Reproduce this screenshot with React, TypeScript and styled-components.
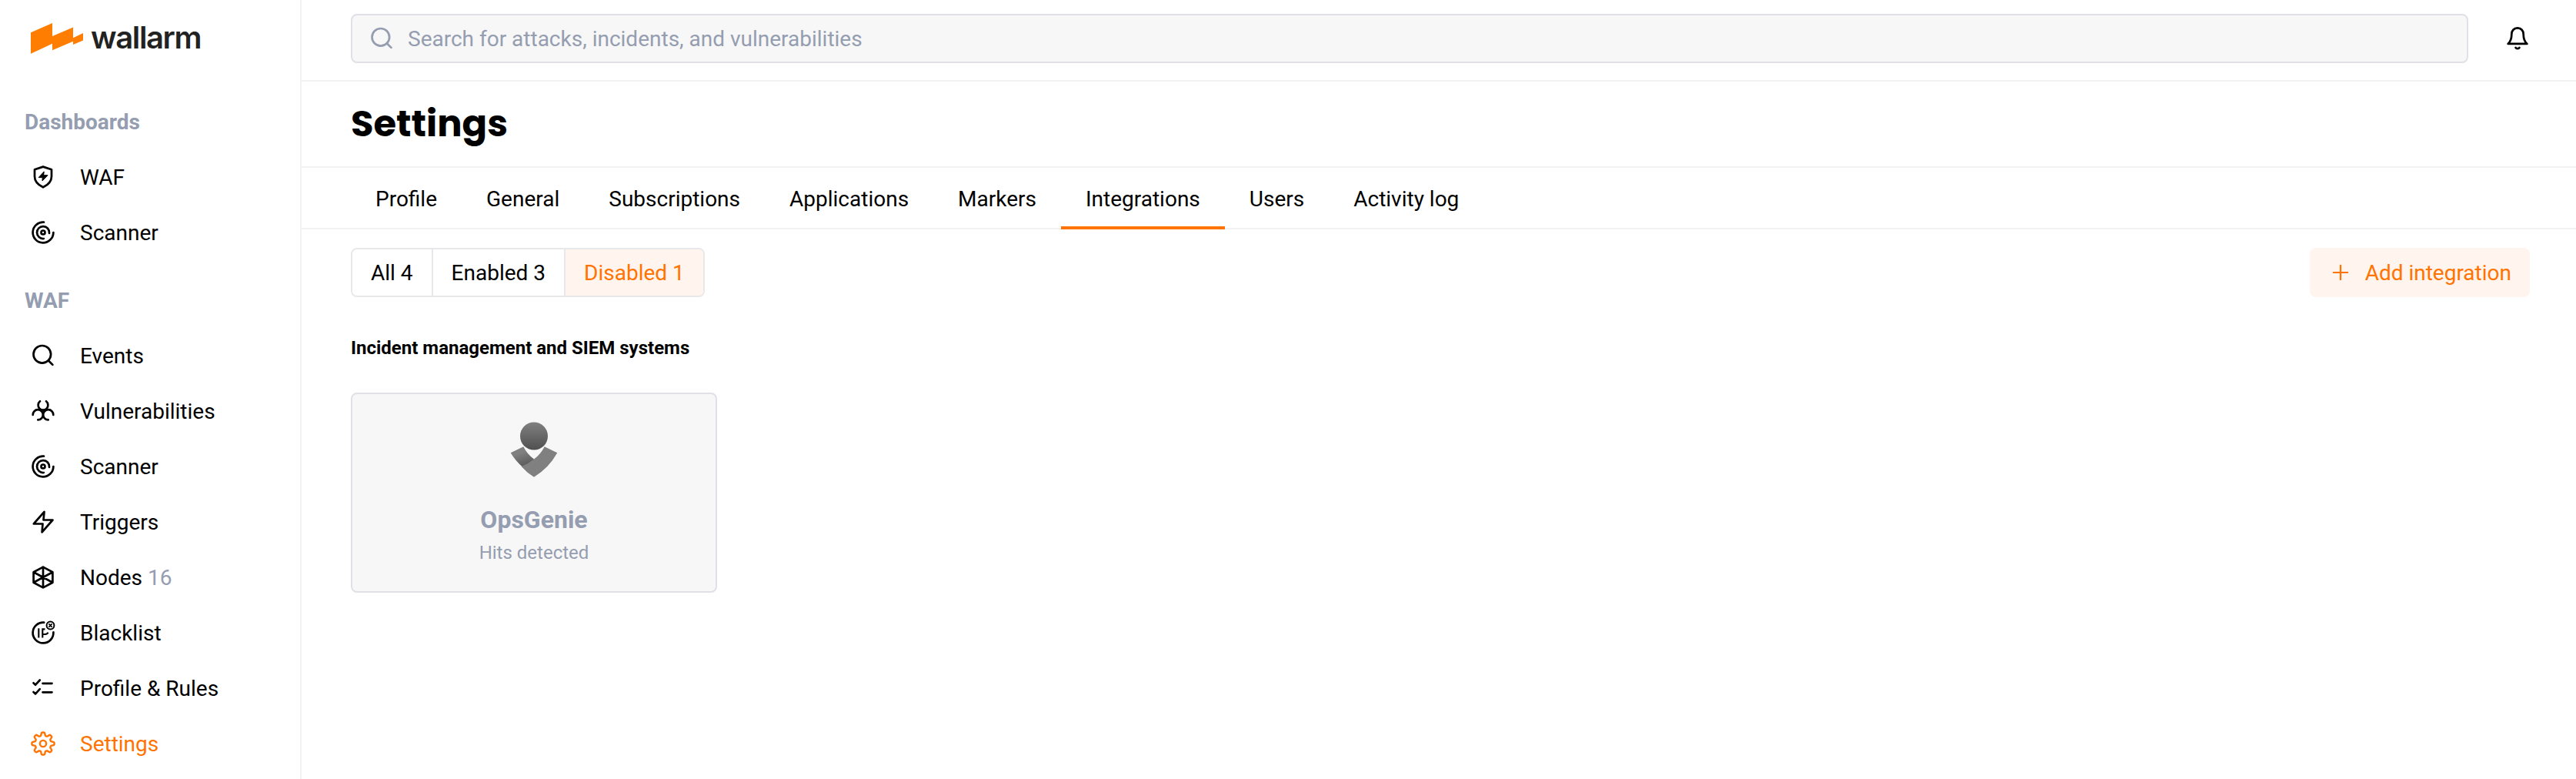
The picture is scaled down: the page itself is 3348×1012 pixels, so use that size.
import React from "react";
import styled, { createGlobalStyle } from "styled-components";

const c = {
  orange: "#ff7300",
  peach: "#fff4ee",
  grey: "#959db0",
  line: "#f2f2f4",
  edge: "#e0e0e6",
  fill: "#f7f7f7",
};

const GlobalStyle = createGlobalStyle`
  *, *::before, *::after { box-sizing: border-box; }
  body {
    margin: 0;
    background: #fff;
    color: #000;
    font: 400 28px/36px Roboto, "Liberation Sans", sans-serif;
  }
  button, input { font: inherit; color: inherit; }
  svg { display: block; }
`;

const Shell = styled.div`
  display: flex;
  width: 100%;
  height: 1012px;
  overflow: hidden;
`;

const Sidebar = styled.nav`
  flex: none;
  width: 392px;
  border-right: 2px solid ${c.line};
`;

const Brand = styled.div`
  display: flex;
  align-items: center;
  gap: 9px;
  height: 122px;
  padding: 0 0 22px 40px;
`;

const Wordmark = styled.span`
  padding-bottom: 2px;
  font: 600 40px/48px Inter, "Liberation Sans", sans-serif;
  letter-spacing: -1.35px;
  color: #222;
`;

const Section = styled.section`
  margin-bottom: 16px;
`;

const SectionTitle = styled.h2`
  margin: 0;
  padding-left: 32px;
  height: 72px;
  font-size: 28px;
  font-weight: 700;
  line-height: 73px;
  color: ${c.grey};
`;

const NavItem = styled.a<{ $active?: boolean }>`
  display: flex;
  align-items: center;
  gap: 32px;
  height: 72px;
  padding-left: 40px;
  color: ${(p) => (p.$active ? c.orange : "#000")};
`;

const NavLabel = styled.span`
  padding-top: 1px;
`;

const Count = styled.span`
  color: ${c.grey};
`;

const Main = styled.main`
  flex: 1;
  min-width: 0;
`;

const TopBar = styled.header`
  display: flex;
  align-items: flex-start;
  gap: 48px;
  height: 106px;
  padding: 18px 60px 0 64px;
  border-bottom: 2px solid ${c.line};
`;

const SearchBox = styled.label`
  display: flex;
  flex: 1;
  align-items: center;
  gap: 18px;
  height: 64px;
  padding: 0 22px;
  border: 2px solid ${c.edge};
  border-radius: 8px;
  background: ${c.fill};
  color: ${c.grey};
`;

const SearchInput = styled.input`
  flex: 1;
  height: 37px;
  padding: 1px 0 0;
  border: 0;
  outline: 0;
  background: none;
  &::placeholder { color: ${c.grey}; opacity: 1; }
`;

const BellButton = styled.button`
  display: grid;
  place-items: center;
  width: 32px;
  height: 64px;
  padding: 0;
  border: 0;
  background: none;
`;

const TitleBar = styled.div`
  display: flex;
  align-items: center;
  height: 112px;
  padding-left: 64px;
  border-bottom: 2px solid ${c.line};
`;

const Title = styled.h1`
  margin: 0;
  font: 700 48px/72px Poppins, Inter, sans-serif;
`;

const Tabs = styled.div`
  display: flex;
  height: 80px;
  padding-left: 64px;
  border-bottom: 2px solid ${c.line};
`;

const Tab = styled.a<{ $active?: boolean }>`
  height: 80px;
  padding: 0 32px;
  line-height: 81px;
  border-bottom: 4px solid ${(p) => (p.$active ? c.orange : "transparent")};
`;

const Toolbar = styled.div`
  display: flex;
  justify-content: space-between;
  padding: 24px 60px 0 64px;
`;

const Segments = styled.div`
  display: flex;
  height: 64px;
  border: 2px solid #e8e8ea;
  border-radius: 8px;
  overflow: hidden;
`;

const Segment = styled.button<{ $active?: boolean }>`
  padding: 1px 24px 0;
  border: 0;
  background: ${(p) => (p.$active ? c.peach : "#fff")};
  color: ${(p) => (p.$active ? c.orange : "#000")};
  & + & { border-left: 2px solid #e8e8ea; }
`;

const AddButton = styled.button`
  display: flex;
  align-items: center;
  gap: 16px;
  height: 64px;
  padding: 0 24px;
  border: 0;
  border-radius: 8px;
  background: ${c.peach};
  color: ${c.orange};
`;

const Group = styled.section`
  padding: 48px 64px 0;
`;

const GroupTitle = styled.h3`
  margin: 0 0 40px;
  font-size: 24px;
  font-weight: 700;
  line-height: 36px;
`;

const Card = styled.article`
  display: flex;
  flex-direction: column;
  align-items: center;
  width: 476px;
  height: 260px;
  padding-top: 32px;
  border: 2px solid ${c.edge};
  border-radius: 8px;
  background: ${c.fill};
  color: ${c.grey};
`;

const CardTitle = styled.div`
  margin: 27px 0 1px;
  font-size: 32px;
  font-weight: 700;
  line-height: 48px;
`;

const CardNote = styled.div`
  font-size: 24px;
  line-height: 36px;
`;

const Glyph = styled.svg.attrs({ viewBox: "0 0 32 32", width: 32, height: 32 })`
  flex: none;
  fill: none;
  stroke: currentColor;
  stroke-width: 2.7;
  stroke-linecap: round;
  stroke-linejoin: round;
`;

const ShieldIcon = () => (
  <Glyph>
    <path d="M16 2.600 27 6.300v8.900c0 6.600-4.600 11-11 14.100C9.600 26.200 5 21.800 5 15.200V6.300z" />
    <path d="M17 9.200 10.200 16.600h5l-.2 4.400 7-7.300h-5z" fill="currentColor" strokeWidth="1" />
  </Glyph>
);

const ScannerIcon = () => (
  <Glyph>
    <path d="M17 2.600A13.400 13.400 0 1 0 29.400 16" />
    <path d="M24 16.800A8 8 0 1 0 16.800 24" />
    <circle cx="16" cy="16" r="2.500" />
  </Glyph>
);

const SearchIcon = () => (
  <Glyph>
    <circle cx="14.800" cy="14.300" r="11.300" />
    <path d="m23 22.500 5.400 5.400" />
  </Glyph>
);

const BiohazardIcon = () => (
  <Glyph>
    <path d="M12 3.300A6.400 6.400 0 1 0 20 3.300" />
    <path d="M2.700 20.900A6.600 6.600 0 1 1 9.300 27.400" />
    <path d="M29.300 20.900A6.600 6.600 0 1 0 22.700 27.400" />
    <path d="M13.500 15h5L16 18.500z" fill="currentColor" />
  </Glyph>
);

const BoltIcon = () => (
  <Glyph>
    <path d="M17.500 2.900 3.800 18.500h11.700L14.600 29.300 28.500 13.500H16.500z" />
  </Glyph>
);

const NodesIcon = () => (
  <Glyph>
    <path d="M16 2.600 28.400 9.300v13.400L16 29.400 3.600 22.700V9.300zM16 2.600v26.800M3.600 9.300l24.800 13.400M28.400 9.300 3.600 22.700" />
  </Glyph>
);

const BlacklistIcon = () => (
  <Glyph>
    <path d="M17.200 2.700A13.400 13.400 0 1 0 29.400 15.300" />
    <path
      d="M10.300 10.300v12.300M15.300 22.600V11.400h3.200M15.300 18h3.200c2 0 3.400-.9 4-2.400"
      strokeWidth="2.100"
      strokeLinecap="butt"
      strokeLinejoin="miter"
    />
    <circle cx="25.500" cy="6.500" r="4.900" strokeWidth="2" />
    <path d="m23.900 4.900 3.200 3.200m0-3.200-3.200 3.200" strokeWidth="1.800" />
  </Glyph>
);

const RulesIcon = () => (
  <Glyph>
    <path d="m3.500 9.300 2.600 2.400 5.700-6.200M3.500 21l2.600 2.400 5.700-6.200M15.500 9.800h12M15.500 21.300h12" />
  </Glyph>
);

// Eight rounded teeth traced as a radial wave around the hub.
const gearPath =
  Array.from({ length: 96 }, (_, i) => {
    const a = (i / 96) * Math.PI * 2;
    const r = 12.5 + 2.1 * Math.tanh(2.2 * Math.cos(8 * a));
    return `${i ? "L" : "M"}${(16 + r * Math.cos(a)).toFixed(2)} ${(16 + r * Math.sin(a)).toFixed(2)}`;
  }).join("") + "Z";

const GearIcon = () => (
  <Glyph overflow="visible">
    <path d={gearPath} strokeWidth="2.400" />
    <circle cx="16" cy="16" r="4.100" strokeWidth="2.400" />
  </Glyph>
);

const BellIcon = () => (
  <Glyph>
    <path d="M16 2.400c-4.800 0-7.700 3.600-7.700 8 0 5.500-.9 9.200-4.700 12.500h24.800c-3.800-3.300-4.700-7-4.700-12.500 0-4.400-2.900-8-7.700-8z" />
    <path d="M13.600 28c1 1.600 3.800 1.600 4.800 0" />
  </Glyph>
);

const PlusIcon = () => (
  <Glyph>
    <path d="M16 6.800v18.400M6.800 16h18.400" strokeWidth="2.200" />
  </Glyph>
);

const LogoMark = () => (
  <svg width="69" height="40" viewBox="0 0 69 40" fill="#ff7d00">
    <path d="M0 12.300 28 0v17L55 5.500v13.700L68 13v9.600L55 28v-4.300L28 35.300v-8.500L0 39.800z" />
  </svg>
);

const OpsGenieLogo = () => (
  <svg width="80" height="80" viewBox="0 0 80 80">
    <defs>
      <linearGradient id="head" x1="0" y1="0" x2="0" y2="1">
        <stop offset="0" stopColor="#808080" />
        <stop offset="1" stopColor="#505050" />
      </linearGradient>
      <linearGradient id="arm" x1="0.300" y1="0" x2="0.700" y2="1">
        <stop offset="0.300" stopColor="#808080" />
        <stop offset="1" stopColor="#555" />
      </linearGradient>
    </defs>
    <circle cx="40" cy="22.500" r="18" fill="url(#head)" />
    <path d="M9.700 44.300 26.300 36.300Q31.500 46.500 40 52.500L38 57 25.500 63Q16 55 9.700 44.300z" fill="url(#arm)" />
    <path d="M53.700 36.300 70.300 44.300Q59 64.500 40 75.700 31 70.300 23.600 62 32 59 40 52.500 48.500 46.500 53.700 36.300z" fill="#808080" />
  </svg>
);

const sections = [
  {
    title: "Dashboards",
    items: [
      { label: "WAF", Icon: ShieldIcon },
      { label: "Scanner", Icon: ScannerIcon },
    ],
  },
  {
    title: "WAF",
    items: [
      { label: "Events", Icon: SearchIcon },
      { label: "Vulnerabilities", Icon: BiohazardIcon },
      { label: "Scanner", Icon: ScannerIcon },
      { label: "Triggers", Icon: BoltIcon },
      { label: "Nodes", Icon: NodesIcon, count: 16 },
      { label: "Blacklist", Icon: BlacklistIcon },
      { label: "Profile & Rules", Icon: RulesIcon },
      { label: "Settings", Icon: GearIcon, active: true },
    ],
  },
] as {
  title: string;
  items: { label: string; Icon: React.FC; count?: number; active?: boolean }[];
}[];

const tabs = ["Profile", "General", "Subscriptions", "Applications", "Markers", "Integrations", "Users", "Activity log"];
const filters = ["All 4", "Enabled 3", "Disabled 1"];

export default function App() {
  return (
    <>
      <GlobalStyle />
      <Shell>
        <Sidebar>
          <Brand>
            <LogoMark />
            <Wordmark>wallarm</Wordmark>
          </Brand>
          {sections.map((s) => (
            <Section key={s.title}>
              <SectionTitle>{s.title}</SectionTitle>
              {s.items.map(({ label, Icon, count, active }) => (
                <NavItem key={label} $active={active}>
                  <Icon />
                  <NavLabel>
                    {label} {count && <Count>{count}</Count>}
                  </NavLabel>
                </NavItem>
              ))}
            </Section>
          ))}
        </Sidebar>
        <Main>
          <TopBar>
            <SearchBox>
              <SearchIcon />
              <SearchInput placeholder="Search for attacks, incidents, and vulnerabilities" />
            </SearchBox>
            <BellButton aria-label="Notifications">
              <BellIcon />
            </BellButton>
          </TopBar>
          <TitleBar>
            <Title>Settings</Title>
          </TitleBar>
          <Tabs>
            {tabs.map((t) => (
              <Tab key={t} $active={t === "Integrations"}>{t}</Tab>
            ))}
          </Tabs>
          <Toolbar>
            <Segments>
              {filters.map((f) => (
                <Segment key={f} $active={f === "Disabled 1"}>{f}</Segment>
              ))}
            </Segments>
            <AddButton>
              <PlusIcon />
              <NavLabel>Add integration</NavLabel>
            </AddButton>
          </Toolbar>
          <Group>
            <GroupTitle>Incident management and SIEM systems</GroupTitle>
            <Card>
              <OpsGenieLogo />
              <CardTitle>OpsGenie</CardTitle>
              <CardNote>Hits detected</CardNote>
            </Card>
          </Group>
        </Main>
      </Shell>
    </>
  );
}
